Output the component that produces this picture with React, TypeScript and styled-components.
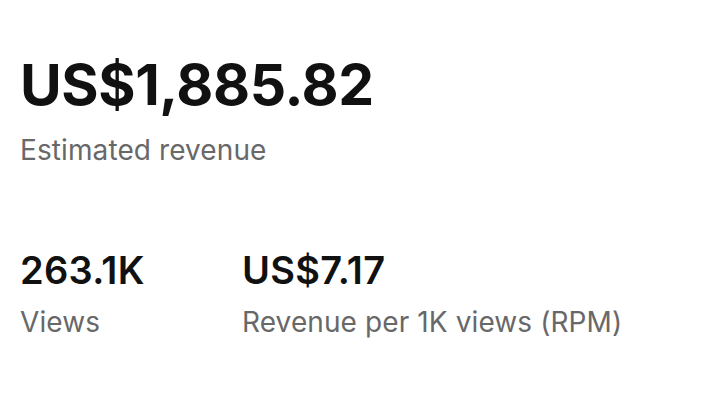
import styled, { createGlobalStyle } from "styled-components";

const GlobalStyle = createGlobalStyle`
  html, body {
    margin: 0;
    padding: 0;
    background: #ffffff;
  }
  body {
    font-family: Inter, "Noto Sans", sans-serif;
  }
`;

type Stat = { value: string; label: string };

const stats: Stat[] = [
  { value: "263.1K", label: "Views" },
  { value: "US$7.17", label: "Revenue per 1K views (RPM)" },
];

export default function App() {
  return (
    <>
      <GlobalStyle />
      <Page>
        <Hero>
          <BigValue>US$1,885.82</BigValue>
          <Label>Estimated revenue</Label>
        </Hero>
        <StatsRow>
          {stats.map((s) => (
            <StatBox key={s.label}>
              <SmallValue>{s.value}</SmallValue>
              <Label>{s.label}</Label>
            </StatBox>
          ))}
        </StatsRow>
      </Page>
    </>
  );
}

const Page = styled.div`
  width: 720px;
  height: 411px;
  box-sizing: border-box;
  padding: 52px 20px 0;
  display: flex;
  flex-direction: column;
  gap: 81px;
`;

const Hero = styled.div`
  display: flex;
  flex-direction: column;
  gap: 15px;
`;

const BigValue = styled.span`
  color: #111111;
  font-size: 57px;
  font-weight: 700;
  line-height: 66px;
  letter-spacing: -0.4px;
`;

const Label = styled.span`
  color: #686868;
  font-size: 28px;
  font-weight: 400;
  line-height: 34px;
  letter-spacing: 0.1px;
`;

const StatsRow = styled.div`
  display: grid;
  grid-template-columns: 222px 1fr;
`;

const StatBox = styled.div`
  display: flex;
  flex-direction: column;
  gap: 13px;
`;

const SmallValue = styled.span`
  color: #111111;
  font-size: 38px;
  font-weight: 600;
  line-height: 44px;
  letter-spacing: 0.3px;
`;
